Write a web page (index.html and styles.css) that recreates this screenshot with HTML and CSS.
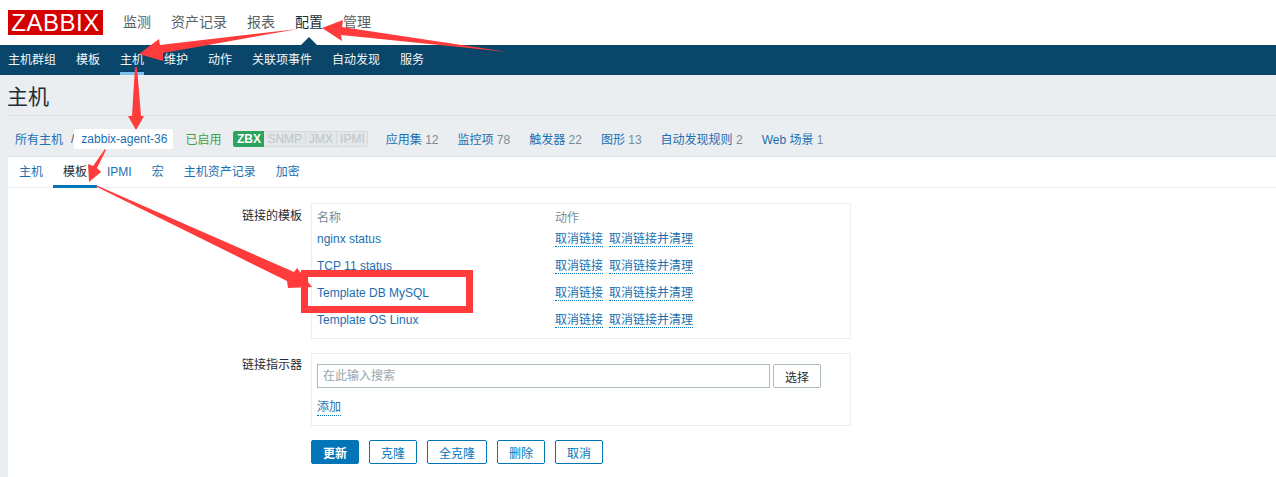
FILE: index.html
```html
<!DOCTYPE html>
<html>
<head>
  <title>主机</title>
  <link rel="stylesheet" href="styles.css">
</head>
<body>
  <header class="top-bar">
    <div class="logo">ZABBIX</div>
    <nav class="top-nav">
      <a>监测</a>
      <a>资产记录</a>
      <a>报表</a>
      <a class="selected">配置</a>
      <a>管理</a>
    </nav>
  </header>
  <nav class="sub-nav">
    <a>主机群组</a>
    <a>模板</a>
    <a class="selected">主机</a>
    <a>维护</a>
    <a>动作</a>
    <a>关联项事件</a>
    <a>自动发现</a>
    <a>服务</a>
  </nav>

  <div class="wrapper">
    <h1 class="title">主机</h1>
    <div class="breadcrumbs">
      <a class="crumb-link">所有主机</a>
      <span class="crumb-sep">/</span>
      <a class="crumb-current">zabbix-agent-36</a>
      <span class="status">已启用</span>
      <div class="badges">
        <span class="badge on">ZBX</span>
        <span class="badge">SNMP</span>
        <span class="badge">JMX</span>
        <span class="badge">IPMI</span>
      </div>
      <div class="host-links">
        <span><a>应用集</a> 12</span>
        <span><a>监控项</a> 78</span>
        <span><a>触发器</a> 22</span>
        <span><a>图形</a> 13</span>
        <span><a>自动发现规则</a> 2</span>
        <span><a>Web 场景</a> 1</span>
      </div>
    </div>

    <div class="panel">
      <div class="tabs">
        <a>主机</a>
        <a class="selected">模板</a>
        <a>IPMI</a>
        <a>宏</a>
        <a>主机资产记录</a>
        <a>加密</a>
      </div>

      <form class="form">
        <div class="form-row">
          <label>链接的模板</label>
          <div class="box templates">
            <table>
              <tr>
                <th>名称</th>
                <th>动作</th>
              </tr>
              <tr>
                <td><a>nginx status</a></td>
                <td><a class="action">取消链接</a><a class="action">取消链接并清理</a></td>
              </tr>
              <tr>
                <td><a>TCP 11 status</a></td>
                <td><a class="action">取消链接</a><a class="action">取消链接并清理</a></td>
              </tr>
              <tr>
                <td><a>Template DB MySQL</a></td>
                <td><a class="action">取消链接</a><a class="action">取消链接并清理</a></td>
              </tr>
              <tr>
                <td><a>Template OS Linux</a></td>
                <td><a class="action">取消链接</a><a class="action">取消链接并清理</a></td>
              </tr>
            </table>
          </div>
        </div>

        <div class="form-row">
          <label>链接指示器</label>
          <div class="box linker">
            <div class="search-row">
              <input type="text" placeholder="在此输入搜索">
              <button type="button" class="btn-grey">选择</button>
            </div>
            <a class="action add">添加</a>
          </div>
        </div>

        <div class="buttons">
          <button type="button" class="btn-main">更新</button>
          <button type="button" class="btn-alt">克隆</button>
          <button type="button" class="btn-alt wide">全克隆</button>
          <button type="button" class="btn-alt">删除</button>
          <button type="button" class="btn-alt">取消</button>
        </div>
      </form>
    </div>
  </div>

  <!-- red annotations drawn over the page -->
  <svg class="marks" width="1276" height="477" viewBox="0 0 1276 477">
    <polygon points="508,52 342,27 343,20 322,28 342,41 341,35"/>
    <polygon points="298,29 160,45 159,39 139,54 163,61 163,53"/>
    <polygon points="135,67 137,67 141,116 144,116 136,130 128,116 132,116"/>
    <polygon points="105,149 106,150 97,168 101,172 89,182 88,164 93,166"/>
    <polygon points="95,186 98,186 294,272 297,268 312,287 288,288 287,281"/>
    <rect x="304.500" y="273.500" width="165" height="36"/>
  </svg>
</body>
</html>
```

FILE: styles.css
```css
* {
  box-sizing: border-box;
}

body {
  margin: 0;
  height: 477px;
  overflow: hidden;
  position: relative;
  font-family: "Liberation Sans", "Noto Sans CJK SC", sans-serif;
  font-size: 12px;
  color: #1f2c33;
  background-color: #ebeef0;
}

a {
  color: #1b6fb0;
}

.top-bar {
  display: flex;
  height: 45px;
  padding-left: 8px;
  background-color: #fff;
}

.logo {
  width: 95px;
  height: 25px;
  margin-top: 10px;
  background-color: #d40000;
  color: #fff;
  font-size: 24px;
  line-height: 25px;
  text-align: center;
  letter-spacing: 0.5px;
}

.top-nav {
  display: flex;
  gap: 20px;
  margin-left: 20px;
  font-size: 14px;
  line-height: 44px;
}

.top-nav a {
  color: #5a5f63;
  position: relative;
}

.top-nav a.selected {
  color: #1f2c33;
}

.top-nav a.selected::after {
  content: "";
  position: absolute;
  left: 6px;
  bottom: 0;
  border-left: 8px solid transparent;
  border-right: 8px solid transparent;
  border-bottom: 8px solid #0a466a;
}

.sub-nav {
  display: flex;
  gap: 20px;
  height: 30px;
  padding-left: 8px;
  background-color: #0a466a;
  line-height: 31px;
}

.sub-nav a {
  color: #f2f5f7;
}

.sub-nav a.selected {
  border-bottom: 3px solid #7bc1ee;
}

.wrapper {
  padding-left: 8px;
}

.title {
  margin: 0 0 0 -1px;
  height: 41px;
  border-bottom: 1px solid #dfe4e7;
  font-size: 21px;
  font-weight: normal;
  line-height: 43px;
}

.breadcrumbs {
  display: flex;
  align-items: center;
  height: 40px;
  padding: 5px 0 0 7px;
}

.crumb-sep {
  margin-left: 8px;
  color: #555;
}

.crumb-current {
  height: 20px;
  padding: 0 6px 0 7px;
  background-color: #fff;
  border-radius: 2px;
  line-height: 20px;
}

.status {
  margin-left: 12px;
  color: #429e47;
}

.badges {
  display: flex;
  margin-left: 12px;
  height: 16px;
  border-radius: 2px;
  background-color: #e3e7e9;
  box-shadow: 0 0 0 1px #d5dade inset;
}

.badge {
  padding: 0 3px;
  height: 16px;
  line-height: 16px;
  color: #bcc6cb;
  border-right: 1px solid #d5dade;
}

.badge:last-child {
  border-right: 0;
}

.badge.on {
  width: 31px;
  padding: 0;
  text-align: center;
  background-color: #2da35e;
  color: #fff;
  font-weight: bold;
  border-radius: 2px 0 0 2px;
  border-right: 0;
}

.host-links {
  display: flex;
  gap: 19px;
  margin-left: 18px;
  color: #768d99;
}

.panel {
  height: 321px;
  background-color: #fff;
  border-top: 1px solid #dfe4e7;
}

.tabs {
  display: flex;
  gap: 20px;
  height: 31px;
  padding-left: 11px;
  line-height: 31px;
  border-bottom: 1px solid #ebeef0;
}

.tabs a {
  position: relative;
}

.tabs a.selected {
  color: #1f2c33;
}

.tabs a.selected::after {
  content: "";
  position: absolute;
  left: -10px;
  right: -10px;
  bottom: -1px;
  height: 3px;
  background-color: #0275b8;
}

.form {
  padding-top: 15px;
}

.form-row {
  display: flex;
  margin-bottom: 14px;
}

.form-row label {
  width: 303px;
  padding-right: 9px;
  padding-top: 5px;
  text-align: right;
  line-height: 14px;
}

.form-row:first-child label {
  padding-top: 6px;
}

.box {
  width: 540px;
  border: 1px solid #ebeef0;
}

.templates {
  height: 136px;
  padding: 6px 5px 0;
}

.templates table {
  border-collapse: collapse;
}

.templates th {
  width: 238px;
  height: 16px;
  padding: 0;
  text-align: left;
  font-weight: normal;
  color: #768d99;
  line-height: 15px;
}

.templates td {
  height: 27px;
  padding: 0;
  line-height: 15px;
}

.action {
  border-bottom: 1px dotted #0275b8;
  margin-right: 6px;
}

.linker {
  height: 73px;
  padding: 10px 5px 0;
}

.search-row {
  display: flex;
  gap: 3px;
}

.search-row input {
  width: 453px;
  height: 24px;
  padding: 0 5px;
  border: 1px solid #acbbc2;
  font: inherit;
  outline: none;
}

.search-row input::placeholder {
  color: #9aa5ab;
}

.btn-grey {
  width: 48px;
  height: 24px;
  padding: 0;
  background-color: #fff;
  border: 1px solid #acbbc2;
  border-radius: 2px;
  font: inherit;
  color: #1f2c33;
}

.add {
  display: inline-block;
  margin-top: 12px;
  line-height: 15px;
}

.buttons {
  display: flex;
  gap: 10px;
  margin-left: 303px;
}

.buttons button {
  width: 48px;
  height: 24px;
  padding: 0;
  border-radius: 2px;
  border: 1px solid #0275b8;
  font: inherit;
}

.buttons .btn-main {
  background-color: #0275b8;
  color: #fff;
  font-weight: bold;
}

.buttons .btn-alt {
  background-color: #fff;
  color: #0275b8;
}

.buttons .wide {
  width: 60px;
}

.marks {
  position: absolute;
  left: 0;
  top: 0;
}

.marks polygon {
  fill: #ff3b3b;
}

.marks rect {
  fill: none;
  stroke: #ff3b3b;
  stroke-width: 7;
}
```
